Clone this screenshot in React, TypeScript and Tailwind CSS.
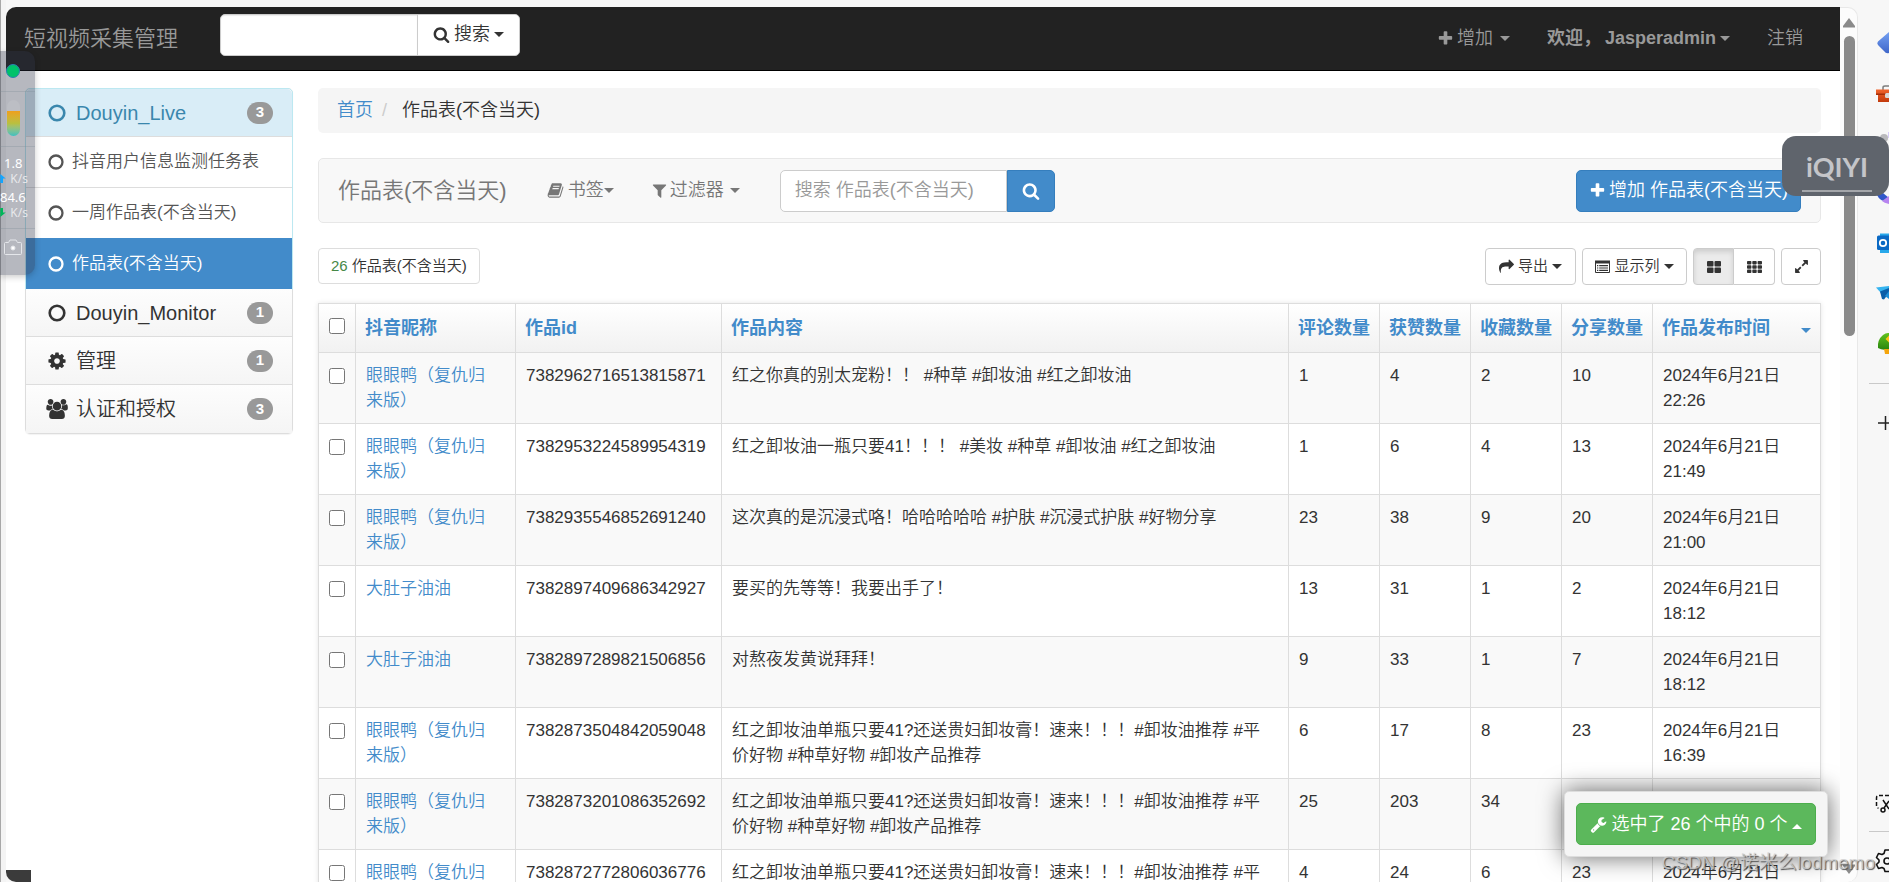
import React, { useState } from "react";
import clsx from "clsx";

const PATHS = {
  search:
    "M1216 832q0-185-131.5-316.5t-316.5-131.5-316.5 131.5-131.5 316.5 131.5 316.5 316.5 131.5 316.5-131.5 131.5-316.5zm512 832q0 52-38 90t-90 38q-54 0-90-38l-343-342q-179 124-399 124-143 0-273.5-55.5t-225-150-150-225-55.5-273.5 55.5-273.5 150-225 225-150 273.5-55.5 273.5 55.5 225 150 150 225 55.5 273.5q0 220-124 399l343 343q37 37 37 90z",
  plus: "M1600 736v192q0 40-28 68t-68 28h-416v416q0 40-28 68t-68 28h-192q-40 0-68-28t-28-68v-416h-416q-40 0-68-28t-28-68v-192q0-40 28-68t68-28h416v-416q0-40 28-68t68-28h192q40 0 68 28t28 68v416h416q40 0 68 28t28 68z",
  filter:
    "M1595 295q17 41-14 70l-493 493v742q0 42-39 59-13 5-25 5-27 0-45-19l-256-256q-19-19-19-45v-486l-493-493q-31-29-14-70 17-39 59-39h1280q42 0 59 39z",
  cog: "M1152 896q0-106-75-181t-181-75-181 75-75 181 75 181 181 75 181-75 75-181zm512-109v222q0 12-8 23t-20 13l-185 28q-19 54-39 91 35 50 107 138 10 12 10 25t-9 23q-27 37-99 108t-94 71q-12 0-26-9l-138-108q-44 23-91 38-16 136-29 186-7 28-36 28h-222q-14 0-24.5-8.5t-11.5-21.5l-28-184q-49-16-90-37l-141 107q-10 9-25 9-14 0-25-11-126-114-165-168-7-10-7-23 0-12 8-23 15-21 51-66.5t54-70.5q-27-50-41-99l-183-27q-13-2-21-12.5t-8-23.5v-222q0-12 8-23t19-13l186-28q14-46 39-92-40-57-107-138-10-12-10-24 0-10 9-23 26-36 98.5-107.5t94.5-71.5q13 0 26 10l138 107q44-23 91-38 16-136 29-186 7-28 36-28h222q14 0 24.5 8.5t11.5 21.5l28 184q49 16 90 37l142-107q9-9 24-9 13 0 25 10 129 119 165 170 7 8 7 22 0 12-8 23-15 21-51 66.5t-54 70.5q26 50 41 98l183 28q13 2 21 12.5t8 23.5z",
  share:
    "M1792 640q0 26-19 45l-512 512q-19 19-45 19t-45-19-19-45v-256h-224q-98 0-175.5 6t-154 21.5-133 42.5-105.5 69.5-80 101-48.5 138.5-17.5 181q0 55 5 123 0 6 2.5 23.5t2.5 26.5q0 15-8.5 25t-23.5 10q-16 0-28-17-7-9-13-22t-13.5-30-10.5-24q-127-285-127-451 0-199 53-333 162-403 875-403h224v-256q0-26 19-45t45-19 45 19l512 512q19 19 19 45z",
  wrench:
    "M448 1472q0-26-19-45t-45-19-45 19-19 45 19 45 45 19 45-19 19-45zm644-420l-682 682q-37 37-90 37-52 0-91-37l-106-108q-38-36-38-90 0-53 38-91l681-681q39 98 114.5 173.5t173.5 114.5zm634-435q0 39-23 106-47 134-164.5 217.5t-258.5 83.5q-185 0-316.5-131.5t-131.5-316.5 131.5-316.5 316.5-131.5q58 0 121.5 16.5t107.5 46.5q16 11 16 28t-16 28l-293 169v224l193 107q5-3 79-48.5t135.5-81 70.5-35.5q15 0 23.5 10t8.5 25z",
  expand:
    "M883 1056q0 13-10 23l-332 332 144 144q19 19 19 45t-19 45-45 19h-448q-26 0-45-19t-19-45v-448q0-26 19-45t45-19 45 19l144 144 332-332q10-10 23-10t23 10l114 114q10 10 10 23zm781-864v448q0 26-19 45t-45 19-45-19l-144-144-332 332q-10 10-23 10t-23-10l-114-114q-10-10-10-23t10-23l332-332-144-144q-19-19-19-45t19-45 45-19h448q26 0 45 19t19 45z",
  book: "M1703 478q40 57 18 129l-275 906q-19 64-76.5 107.5t-122.5 43.5h-923q-77 0-148.5-53.5t-99.5-131.5q-24-67-2-127 0-4 3-27t4-37q1-8-3-21.5t-3-19.5q2-11 8-21t16.5-23.5 16.5-23.5q23-38 45-91.5t30-91.5q3-10 .5-30t-.5-28q3-11 17-28t17-23q21-36 42-92t25-90q1-9-2.5-32t.5-28q4-13 22-30.5t22-22.5q19-26 42.5-84.5t27.5-96.5q1-8-3-25.5t-2-26.5q2-8 9-18t18-23 17-21q8-12 16.5-30.5t15-35 16-36 19.5-32 26.5-23.5 36-11.5 47.5 5.5l-1 3q38-9 51-9h761q74 0 114 56t18 130l-274 906q-36 119-71.5 153.5t-128.5 34.5h-869q-27 0-38 15-11 16-1 43 24 70 144 70h923q29 0 56-15.5t35-41.5l300-987q7-22 5-57 38 15 59 43zm-1064 2q-4 13 2 22.5t20 9.5h608q13 0 25.5-9.5t16.5-22.5l21-64q4-13-2-22.5t-20-9.5h-608q-13 0-25.5 9.5t-16.5 22.5zm-83 256q-4 13 2 22.5t20 9.5h608q13 0 25.5-9.5t16.5-22.5l21-64q4-13-2-22.5t-20-9.5h-608q-13 0-25.5 9.5t-16.5 22.5z",
  users:
    "M657 896q-162 5-265 128h-134q-82 0-138-40.5t-56-118.5q0-353 124-353 6 0 43.5 21t97.5 42.5 119 21.5q67 0 133-23-5 37-5 66 0 159 93 293zm1071 637q0 120-73 189.5t-194 69.5h-874q-121 0-194-69.5t-73-189.5q0-53 3.5-103.5t14-109 26.5-108.5 43-97.5 62-81 85.5-53.5 111.5-20q10 0 43 21.5t73 48 107 48 135 21.5 135-21.5 107-48 73-48 43-21.5q61 0 111.5 20t85.5 53.5 62 81 43 97.5 26.5 108.5 14 109 3.5 103.5zm-1024-1277q0 106-75 181t-181 75-181-75-75-181 75-181 181-75 181 75 75 181zm704 384q0 159-112.5 271.5t-271.5 112.5-271.5-112.5-112.5-271.5 112.5-271.5 271.5-112.5 271.5 112.5 112.5 271.5zm576 225q0 78-56 118.5t-138 40.5h-134q-103-123-265-128 93-134 93-293 0-29-5-66 66 23 133 23 59 0 119-21.5t97.5-42.5 43.5-21q124 0 124 353zm-128-609q0 106-75 181t-181 75-181-75-75-181 75-181 181-75 181 75 75 181z",
};

type IconProps = { name: keyof typeof PATHS; className?: string };

function Icon({ name, className }: IconProps) {
  return (
    <svg viewBox={name === "users" ? "64 0 1920 1792" : "0 0 1792 1792"} fill="currentColor" aria-hidden="true" className={clsx("shrink-0", className)}>
      <path d={PATHS[name]} />
    </svg>
  );
}

function Ring({ className }: { className?: string }) {
  return (
    <svg viewBox="0 0 18 18" fill="none" stroke="currentColor" strokeWidth="2.6" aria-hidden="true" className={clsx("shrink-0", className)}>
      <circle cx="9" cy="9" r="7.3" />
    </svg>
  );
}

function Caret({ up, className }: { up?: boolean; className?: string }) {
  return (
    <svg viewBox="0 0 10 5" fill="currentColor" aria-hidden="true" className={clsx("h-[5px] w-[10px] shrink-0", className)}>
      <path d={up ? "M0 5L5 0L10 5Z" : "M0 0H10L5 5Z"} />
    </svg>
  );
}

const TABLE_NAME = "作品表(不含当天)";

const menu = [
  { name: "Douyin_Monitor", count: 1, icon: <Ring className="h-[18px] w-[18px]" /> },
  { name: "管理", count: 1, icon: <Icon name="cog" className="h-[20px] w-[20px]" /> },
  { name: "认证和授权", count: 3, icon: <Icon name="users" className="h-[20px] w-[22px]" /> },
];

const duck = "眼眼鸭（复仇归来版）";
const belly = "大肚子油油";
const promo = "红之卸妆油单瓶只要41?还送贵妇卸妆膏！速来！！！#卸妆油推荐 #平价好物 #种草好物 #卸妆产品推荐";

const rows = [
  { name: duck, id: "7382962716513815871", text: "红之你真的别太宠粉！！ #种草 #卸妆油 #红之卸妆油", n: [1, 4, 2, 10], time: "22:26" },
  { name: duck, id: "7382953224589954319", text: "红之卸妆油一瓶只要41！！！ #美妆 #种草 #卸妆油 #红之卸妆油", n: [1, 6, 4, 13], time: "21:49" },
  { name: duck, id: "7382935546852691240", text: "这次真的是沉浸式咯！哈哈哈哈哈 #护肤 #沉浸式护肤 #好物分享", n: [23, 38, 9, 20], time: "21:00" },
  { name: belly, id: "7382897409686342927", text: "要买的先等等！我要出手了！", n: [13, 31, 1, 2], time: "18:12" },
  { name: belly, id: "7382897289821506856", text: "对熬夜发黄说拜拜！", n: [9, 33, 1, 7], time: "18:12" },
  { name: duck, id: "7382873504842059048", text: promo, n: [6, 17, 8, 23], time: "16:39" },
  { name: duck, id: "7382873201086352692", text: promo, n: [25, 203, 34, 27], time: "16:38" },
  { name: duck, id: "7382872772806036776", text: promo, n: [4, 24, 6, 23], time: "16:36" },
];

function Badge({ children }: { children: React.ReactNode }) {
  return (
    <span className="ml-auto flex h-[22px] w-[26px] items-center justify-center rounded-full bg-[#999] text-[15px] font-bold text-white">
      {children}
    </span>
  );
}

function Navbar() {
  return (
    <nav className="flex h-16 shrink-0 items-center border-b border-black bg-[#222] pl-[18px] pr-[37px] text-[18px] text-[#999]">
      <a href="#" className="w-[196px] text-[22px] leading-[25px]">
        短视频采集管理
      </a>
      <form className="mb-2 flex h-[42px]" onSubmit={(e) => e.preventDefault()}>
        <input type="text" aria-label="搜索" className="w-[198px] rounded-l-[5px] border border-[#ccc] bg-white px-3 text-[#555] shadow-[inset_0_1px_1px_rgba(0,0,0,0.08)] outline-none" />
        <button className="-ml-px flex w-[103px] items-center justify-center gap-1 rounded-r-[5px] border border-[#ccc] bg-white text-[#333]">
          <Icon name="search" className="h-[17px] w-[17px]" />
          搜索
          <Caret />
        </button>
      </form>
      <div className="ml-auto flex items-center">
        <a href="#" className="flex items-center">
          <Icon name="plus" className="mr-[3px] h-[17px] w-[17px]" />
          增加
          <Caret className="ml-[7px]" />
        </a>
        <a href="#" className="ml-[37px] flex items-center font-bold">
          欢迎，<span className="ml-1">Jasperadmin</span>
          <Caret className="ml-1" />
        </a>
        <a href="#" className="ml-[37px]">
          注销
        </a>
      </div>
    </nav>
  );
}

function Sidebar() {
  const links = ["抖音用户信息监测任务表", "一周作品表(不含当天)", TABLE_NAME];
  const [active, setActive] = useState(TABLE_NAME);
  return (
    <aside className="w-[268px] shrink-0 self-start rounded-[5px] border border-[#ddd] shadow-[0_1px_1px_rgba(0,0,0,0.05)]">
      <div className="-m-px rounded-t-[5px] border border-[#bce8f1]">
        <a href="#" className="flex h-12 items-center rounded-t-[5px] border-b border-[#ddd] bg-[#d9edf7] pl-[22px] pr-[19px] text-[20px] text-[#3a87ad]">
          <Ring className="mr-[10px] h-[18px] w-[18px]" />
          Douyin_Live
          <Badge>3</Badge>
        </a>
        {links.map((link, i) => (
          <a
            key={link}
            href="#"
            onClick={() => setActive(link)}
            className={clsx(
              "flex items-center pl-[22px] text-[17px]",
              link === active ? "h-[51px] bg-[#428bca] text-white" : "bg-white text-[#555]",
              i === 0 && "h-[51px] border-b border-[#ddd]",
              i === 1 && "h-[50px]"
            )}
          >
            <Ring className="mr-2 h-4 w-4" />
            {link}
          </a>
        ))}
      </div>
      {menu.map((item) => (
        <a
          key={item.name}
          href="#"
          className="flex h-12 items-center border-b border-[#ddd] bg-linear-to-b from-[#fdfdfd] to-[#f5f5f5] pl-[22px] pr-[19px] text-[20px] text-[#333] last:border-b-0"
        >
          <span className="mr-[10px] flex w-[18px] justify-center">{item.icon}</span>
          {item.name}
          <Badge>{item.count}</Badge>
        </a>
      ))}
    </aside>
  );
}

function Toolbar() {
  return (
    <div className="mt-[25px] flex h-[65px] items-center rounded-[5px] border border-[#e7e7e7] bg-[#f8f8f8] px-[19px] text-[18px] text-[#777]">
      <h1 className="text-[22px]">{TABLE_NAME}</h1>
      <button className="ml-10 flex items-center">
        <Icon name="book" className="mr-1 h-[17px] w-[17px]" />
        书签
        <Caret />
      </button>
      <button className="ml-[37px] flex items-center">
        <Icon name="filter" className="mr-[2px] h-[17px] w-[17px]" />
        过滤器
        <Caret className="ml-[6px]" />
      </button>
      <form className="ml-10 flex h-[42px]" onSubmit={(e) => e.preventDefault()}>
        <input
          type="text"
          aria-label="搜索 作品表"
          placeholder="搜索 作品表(不含当天)"
          className="w-[227px] rounded-l-[5px] border border-[#ccc] bg-white px-[14px] text-[#555] outline-none placeholder:text-[#999]"
        />
        <button aria-label="搜索" className="flex w-12 items-center justify-center rounded-r-[5px] border border-[#357ebd] bg-[#428bca] text-white">
          <Icon name="search" className="h-[18px] w-[18px]" />
        </button>
      </form>
      <a href="#" className="ml-auto flex h-[42px] items-center gap-[3px] rounded-[5px] border border-[#357ebd] bg-[#428bca] px-3 text-white">
        <Icon name="plus" className="h-[17px] w-[17px]" />
        增加 {TABLE_NAME}
      </a>
    </div>
  );
}

function Actions() {
  const btn = "flex h-[37px] items-center justify-center border border-[#ccc]";
  return (
    <div className="mt-[25px] flex text-[15px] text-[#333]">
      <p className="flex h-9 items-center rounded-[4px] border border-[#ddd] px-3">
        <span className="mr-1 text-[#468847]">26</span>
        {TABLE_NAME}
      </p>
      <button className={clsx(btn, "ml-auto w-[91px] gap-1 rounded-[4px]")}>
        <Icon name="share" className="h-[15px] w-[15px]" />
        导出
        <Caret />
      </button>
      <button className={clsx(btn, "ml-[6px] w-[105px] gap-1 rounded-[4px]")}>
        <svg viewBox="0 0 15 13" aria-hidden="true" className="h-[13px] w-[15px] shrink-0">
          <path fill="none" stroke="currentColor" d="M.5 1.5h14v11H.5z" />
          <path fill="currentColor" d="M0 .5h15v3H0zM2 5h1.300v1.200H2zM2 7.400h1.300v1.200H2zM2 9.800h1.300V11H2zM4.200 5H13v1.200H4.200zM4.200 7.400H13v1.200H4.200zM4.200 9.800H13V11H4.200z" />
        </svg>
        显示列
        <Caret />
      </button>
      <div className="ml-[6px] flex">
        <button aria-label="大图标" className={clsx(btn, "w-[41px] rounded-l-[4px] border-[#adadad] bg-[#ebebeb] shadow-[inset_0_3px_5px_rgba(0,0,0,0.125)]")}>
          <svg viewBox="0 0 14 12" fill="currentColor" aria-hidden="true" className="h-3 w-[14px]">
            <rect width="6.500" height="5.500" rx="1" />
            <rect x="7.500" width="6.500" height="5.500" rx="1" />
            <rect y="6.500" width="6.500" height="5.500" rx="1" />
            <rect x="7.500" y="6.500" width="6.500" height="5.500" rx="1" />
          </svg>
        </button>
        <button aria-label="小图标" className={clsx(btn, "w-[41px] rounded-r-[4px] border-l-0 bg-white")}>
          <svg viewBox="0 0 15 12" fill="currentColor" aria-hidden="true" className="h-3 w-[15px]">
            {[0, 4.3, 8.6].map((y) =>
              [0, 5.3, 10.6].map((x) => <rect key={x + "-" + y} x={x} y={y} width="4.400" height="3.400" rx="0.800" />)
            )}
          </svg>
        </button>
      </div>
      <button aria-label="全屏" className={clsx(btn, "ml-[6px] w-10 rounded-[4px]")}>
        <Icon name="expand" className="h-[15px] w-[15px]" />
      </button>
    </div>
  );
}

function WorksTable() {
  const heads = ["抖音昵称", "作品id", "作品内容", "评论数量", "获赞数量", "收藏数量", "分享数量"];
  return (
    <table className="mt-[18px] w-full table-fixed border-collapse text-left text-[17px] leading-[25px] text-[#333] shadow-[0_0_5px_rgba(0,0,0,0.1)]">
      <colgroup>
        <col className="w-[37px]" />
        <col className="w-[160px]" />
        <col className="w-[206px]" />
        <col />
        <col className="w-[91px]" />
        <col className="w-[91px]" />
        <col className="w-[91px]" />
        <col className="w-[91px]" />
        <col className="w-[168px]" />
      </colgroup>
      <thead>
        <tr className="h-[49px] bg-linear-to-b from-white to-[#f1f1f1] text-[18px] text-[#428bca]">
          <th className="border border-[#ddd] pb-1">
            <input type="checkbox" aria-label="全选" className="mx-auto block h-4 w-4" />
          </th>
          {heads.map((h) => (
            <th key={h} className="border border-[#ddd] px-[9px] font-bold whitespace-nowrap">
              <a href="#">{h}</a>
            </th>
          ))}
          <th className="border border-[#ddd] px-[9px] font-bold">
            <a href="#" className="flex items-center justify-between">
              作品发布时间
              <Caret className="mt-1" />
            </a>
          </th>
        </tr>
      </thead>
      <tbody>
        {rows.map((row) => (
          <tr key={row.id} className="h-[71px] bg-white align-top odd:bg-[#f9f9f9]">
            <td className="border border-[#ddd] pt-[15px]">
              <input type="checkbox" aria-label={row.id} className="mx-auto block h-4 w-4" />
            </td>
            <td className="border border-[#ddd] py-[10px] pl-[10px] pr-5 text-[#428bca]">
              <a href="#">{row.name}</a>
            </td>
            <td className="border border-[#ddd] p-[10px]">{row.id}</td>
            <td className="border border-[#ddd] py-[10px] pl-[10px] pr-5">{row.text}</td>
            {row.n.map((n, i) => (
              <td key={i} className="border border-[#ddd] p-[10px]">
                {n}
              </td>
            ))}
            <td className="border border-[#ddd] p-[10px]">
              2024年6月21日
              <br />
              {row.time}
            </td>
          </tr>
        ))}
      </tbody>
    </table>
  );
}

function NetWidget() {
  return (
    <div className="absolute left-0 top-[51px] flex h-[224px] w-[35px] flex-col rounded-r-[10px] bg-[#2e3448]/35 text-white shadow-[0_2px_6px_rgba(0,0,0,0.2)]">
      <div className="flex h-[41px] justify-center border-b border-[#7a8a94]/30 pr-[9px] pt-[13px]">
        <span className="h-[14px] w-[14px] rounded-full border border-[#2e7fb0] bg-[#00c26a]" />
      </div>
      <div className="flex h-[55px] justify-center border-b border-[#7a8a94]/30 pr-[9px] pt-2">
        <span className="flex h-[36px] w-[13px] flex-col justify-end overflow-hidden rounded-full bg-[#bcbec4]">
          <span className="h-[25px] bg-linear-to-b from-[#ee9f1c] via-[#b8c040] to-[#37c0c0]" />
        </span>
      </div>
      <div className="h-[82px] border-b border-[#7a8a94]/30 pt-2 font-['Noto_Sans',sans-serif] text-[13px] font-normal leading-[17px]">
        <p className="pl-1">1.8</p>
        <p className="flex h-[13px] items-center justify-between pr-[7px] text-[12px] text-white/70">
          <svg viewBox="0 0 6 10" fill="#12a5ff" className="h-[9px] w-[6px]">
            <path d="M0 0L6 5H3V10H0Z" />
          </svg>
          K/s
        </p>
        <p className="mt-1">84.6</p>
        <p className="flex h-[13px] items-center justify-between pr-[7px] text-[12px] text-white/70">
          <svg viewBox="0 0 6 10" fill="#00b65a" className="h-[9px] w-[6px]">
            <path d="M0 10L6 5H3V0H0Z" />
          </svg>
          K/s
        </p>
      </div>
      <svg viewBox="0 0 18 16" fill="none" stroke="#e4e6ea" className="ml-1 mt-[10px] h-4 w-[18px]">
        <path d="M1.500 3.500h3l1.500-2.500h6l1.500 2.500h3q1 0 1 1v10q0 1-1 1h-15q-1 0-1-1v-10q0-1 1-1z" />
        <circle cx="9" cy="9" r="2" fill="#fff" />
      </svg>
    </div>
  );
}

function BrowserBar() {
  return (
    <aside className="relative w-[31px] shrink-0 overflow-hidden">
      <svg viewBox="0 0 31 875" className="h-[875px] w-[31px]" aria-hidden="true">
        <defs>
          <linearGradient id="gem" x1="0" y1="0" x2="0" y2="1">
            <stop offset="0" stopColor="#74a0f2" />
            <stop offset="1" stopColor="#3f66c9" />
          </linearGradient>
          <linearGradient id="box" x1="0" y1="0" x2="0" y2="1">
            <stop offset="0" stopColor="#f0642c" />
            <stop offset="1" stopColor="#c23a0c" />
          </linearGradient>
          <linearGradient id="leaf" x1="0" y1="0" x2="0" y2="1">
            <stop offset="0" stopColor="#62c41e" />
            <stop offset="1" stopColor="#28850f" />
          </linearGradient>
        </defs>
        <path fill="url(#gem)" d="M20 34.500L31 25V46Q28 47 26 44L20 38Q18.500 36 20 34.500Z" />
        <path fill="none" stroke="#7d7d7d" strokeWidth="1.500" d="M25 83V80.500Q25 79 27 79H31" />
        <path fill="url(#box)" d="M18 82.500H31V95H20V88H18Z" />
        <path fill="#a5300a" d="M18 86.500H31V88H18Z" />
        <rect x="27" y="86" width="5" height="5" rx="1.500" fill="#d9d9d9" />
        <circle cx="26" cy="131" r="4" fill="#b9b9bc" />
        <path fill="#d7cdf7" d="M30 125H31V131H30Z" />
        <path fill="#3057c9" d="M19 188L25 186L31 191V195Q22 195 19 188Z" />
        <path fill="#b784f0" d="M24 194L31 189V197Q26 196 24 194Z" />
        <path fill="#28a8ea" d="M22 226.500H31V246H22Z" />
        <path fill="#0a69c4" d="M19 230Q19 228.500 20.500 228.500H31V243H20.500Q19 243 19 241.500Z" />
        <circle cx="25" cy="236" r="3.200" fill="none" stroke="#fff" strokeWidth="1.800" />
        <path fill="#35b4f0" d="M18 280.500L31 279V286L23 286Z" />
        <path fill="#0b5ea8" d="M22 284.500L31 281V286L26 292.500L24 292Z" />
        <path fill="#1e8fd8" d="M27 289L31 284V292Z" />
        <path fill="url(#leaf)" d="M20 341Q19 333 25 328Q28 325.500 31 326V342Q25 344 20 341Z" />
        <path fill="#f5a50c" d="M26 342H31V347H27Z" />
        <path fill="#ffc21a" d="M27.500 332L31 328.500V335.500Z" />
        <path stroke="#c9c9c9" d="M11 376.500H31M11 824.500H31" />
        <path stroke="#222" strokeWidth="1.500" d="M20 416H31M27.500 409V423" />
        <path fill="none" stroke="#111" strokeWidth="1.500" strokeDasharray="4 2" d="M31 788.500H21Q18.500 788.500 18.500 791V799Q18.500 801 20.500 801" />
        <path fill="none" stroke="#111" strokeWidth="1.500" d="M25 793L31 802M31 794L26 801" />
        <circle cx="25" cy="803" r="2" fill="none" stroke="#111" strokeWidth="1.500" />
        <path
          fill="none"
          stroke="#111"
          strokeWidth="1.600"
          strokeLinejoin="round"
          d="M31 843H27L26 846.500L24 847.500L20.500 846.500L18.500 850.500L21 853V855L18.500 857.500L20.500 861.500L24 860.500L26 861.500L27 864.500H31"
        />
        <circle cx="29" cy="854" r="3" fill="none" stroke="#111" strokeWidth="1.600" />
      </svg>
    </aside>
  );
}

function ScrollBar() {
  return (
    <div className="relative flex w-[18px] shrink-0 flex-col items-center rounded-r-[10px] border-r border-t border-[#e8e8e8] bg-[#fcfcfc] pl-px pt-[10px]">
      <svg viewBox="0 0 12 10" fill="#8a8a8a" className="h-[10px] w-3">
        <path d="M6 0L12 8V9.500H0V8Z" />
      </svg>
      <div className="mt-2 h-[300px] w-[11px] rounded-full bg-[#8a8a8a]" />
      <svg viewBox="0 0 12 10" fill="#8a8a8a" className="mb-2 mt-auto h-[10px] w-3">
        <path d="M6 10L12 2V.5H0V2Z" />
      </svg>
    </div>
  );
}

function App() {
  return (
    <div className="relative flex h-screen overflow-hidden bg-[#f7f7f7] font-['Liberation_Sans','Noto_Sans_CJK_SC',sans-serif] font-[350]">
      <div className="w-[6px] shrink-0 border-l border-[#a8a8a8] bg-[#f4f4f4]" />
      <main className="relative mt-[7px] flex min-w-0 flex-1 flex-col overflow-hidden rounded-l-[10px] bg-white">
        <Navbar />
        <div className="flex min-h-0 flex-1 gap-[25px] pl-[19px] pr-[19px] pt-[17px]">
          <Sidebar />
          <div className="min-w-0 flex-1">
            <nav aria-label="breadcrumb" className="flex h-[45px] items-center rounded-[5px] bg-[#f5f5f5] px-[19px] text-[18px] text-[#333]">
              <a href="#" className="text-[#428bca]">
                首页
              </a>
              <span className="ml-[9px] mr-[15px] text-[#ccc]">/</span>
              {TABLE_NAME}
            </nav>
            <Toolbar />
            <Actions />
            <WorksTable />
          </div>
        </div>
        <div className="absolute bottom-0 left-0 h-3 w-[25px] bg-[#3b3b3b]" />
        <div className="absolute bottom-[25px] right-3 rounded-[5px] border border-[#ddd] bg-[#f5f5f5] p-[11px] shadow-[0_0_25px_rgba(0,0,0,0.6)]">
          <button className="flex h-[42px] w-[240px] items-center justify-center gap-1 rounded-[5px] border border-[#4cae4c] bg-[#5cb85c] text-[18px] text-white">
            <Icon name="wrench" className="h-[17px] w-[17px]" />
            选中了 26 个中的 0 个
            <Caret up className="mt-1" />
          </button>
        </div>
      </main>
      <div className="mt-[7px] flex">
        <ScrollBar />
        <BrowserBar />
      </div>
      <NetWidget />
      <div className="absolute right-0 top-[136px] flex h-[60px] w-[107px] flex-col items-center rounded-[14px] bg-[#5f646c] pt-[14px] pl-[3px] font-['Lato',sans-serif] text-[27px] font-bold leading-[34px] text-[#c4c5c9]">
        iQIYI
        <span className="mt-[6px] h-[2px] w-[70px] shrink-0 bg-[#a4a6aa]" />
      </div>
      <p className="absolute bottom-[6px] right-[14px] text-[19px] leading-[26px] text-[#d0d0d0]/80 [text-shadow:1px_1px_1px_#555]">CSDN @诺米么lodmemo</p>
    </div>
  );
}

export default App;
